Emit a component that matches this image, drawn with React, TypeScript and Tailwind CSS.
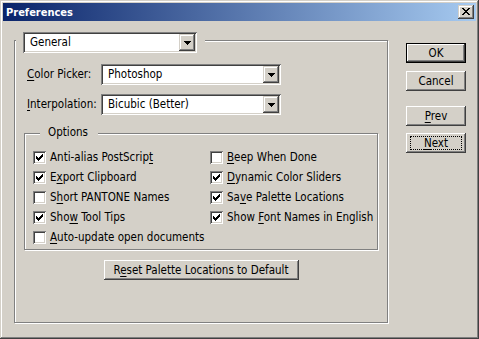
import React from "react";

const sunken =
  "shadow-[inset_1px_1px_0_#808080,inset_-1px_-1px_0_#ffffff,inset_2px_2px_0_#404040,inset_-2px_-2px_0_#d4d0c8]";
const raised =
  "shadow-[inset_-1px_-1px_0_#404040,inset_1px_1px_0_#ffffff,inset_-2px_-2px_0_#808080,inset_2px_2px_0_#d4d0c8]";
const raisedCap =
  "shadow-[inset_-1px_-1px_0_#404040,inset_1px_1px_0_#d4d0c8,inset_-2px_-2px_0_#808080,inset_2px_2px_0_#ffffff]";

function U({ children }: { children: React.ReactNode }) {
  return <span className="underline decoration-1 underline-offset-[2px]">{children}</span>;
}

function Check({ checked }: { checked: boolean }) {
  return (
    <div className={`w-[13px] h-[13px] shrink-0 bg-white ${sunken} flex items-start`}>
      {checked && (
        <svg className="ml-[3px] mt-[3px]" width="7" height="7" shapeRendering="crispEdges">
          <path
            d="M6 0h1v1h-1z M5 1h2v1h-2z M0 2h1v1h-1z M4 2h3v1h-3z M0 3h2v1h-2z M3 3h3v1h-3z M0 4h5v1h-5z M1 5h3v1h-3z M2 6h1v1h-1z"
            fill="#000"
          />
        </svg>
      )}
    </div>
  );
}

function Arrow() {
  return (
    <div className={`w-[16px] h-[17px] shrink-0 bg-[#d4d0c8] ${raisedCap} flex items-center justify-center`}>
      <svg width="7" height="4" shapeRendering="crispEdges" className="mt-[1px]">
        <path d="M0 0h7v1h-7z M1 1h5v1h-5z M2 2h3v1h-3z M3 3h1v1h-1z" fill="#000" />
      </svg>
    </div>
  );
}

function Combo({ value, className }: { value: string; className: string }) {
  return (
    <div className={`flex h-[21px] bg-white p-[2px] ${sunken} ${className}`}>
      <div className="flex-1 flex items-center pl-[5px] leading-[13px]">{value}</div>
      <Arrow />
    </div>
  );
}

function Btn({
  children,
  className = "",
  def = false,
  focus = false,
}: {
  children: React.ReactNode;
  className?: string;
  def?: boolean;
  focus?: boolean;
}) {
  if (def) {
    return (
      <div className={`border border-black ${className}`}>
        <div className={`w-full h-full bg-[#d4d0c8] ${raised} flex items-center justify-center leading-[13px]`}>
          {children}
        </div>
      </div>
    );
  }
  return (
    <div className={`bg-[#d4d0c8] ${raised} flex items-center justify-center leading-[13px] p-[3px] ${className}`}>
      {focus ? (
        <div className="w-full h-full mx-[1px] border border-dotted border-black flex items-center justify-center">
          {children}
        </div>
      ) : (
        children
      )}
    </div>
  );
}

function Opt({ checked, children }: { checked: boolean; children: React.ReactNode }) {
  return (
    <div className="h-[20px] flex items-center">
      <Check checked={checked} />
      <span className="ml-[4px] leading-[13px] whitespace-nowrap">{children}</span>
    </div>
  );
}

export default function App() {
  return (
    <div
      className={`w-[479px] h-[339px] p-[3px] bg-[#d4d0c8] text-black text-[11.5px] font-['DejaVu_Sans_Condensed','DejaVu_Sans',sans-serif] shadow-[inset_-1px_-1px_0_#404040,inset_1px_1px_0_#d4d0c8,inset_-2px_-2px_0_#808080,inset_2px_2px_0_#ffffff] flex flex-col`}
    >
      {/* Title bar */}
      <div className="h-[18px] bg-linear-to-r/srgb from-[#0a246a] to-[#a6caf0] flex items-center justify-between pl-[3px] pr-[2px]">
        <span className="text-white text-[11px] font-bold leading-[13px]">Preferences</span>
        <div className={`w-[16px] h-[14px] bg-[#d4d0c8] ${raisedCap} flex items-start`}>
          <svg className="ml-[4px] mt-[3px]" width="8" height="7" shapeRendering="crispEdges">
            <path
              d="M0 0h2v1h-2z M6 0h2v1h-2z M1 1h2v1h-2z M5 1h2v1h-2z M2 2h4v1h-4z M3 3h2v1h-2z M2 4h4v1h-4z M1 5h2v1h-2z M5 5h2v1h-2z M0 6h2v1h-2z M6 6h2v1h-2z"
              fill="#000"
            />
          </svg>
        </div>
      </div>

      {/* Body */}
      <div className="flex pl-[11px] pt-[19px]">
        {/* Main group */}
        <div className="relative w-[374px] h-[283px] border border-[#808080] shadow-[inset_1px_1px_0_#ffffff,1px_1px_0_#ffffff] flex flex-col">
          <div className="absolute left-[1px] -top-[9px] bg-[#d4d0c8] pl-[7px] pr-[8px]">
            <Combo value="General" className="w-[174px]" />
          </div>

          <div className="mt-[23px] pl-[12px] flex items-center">
            <span className="w-[74px] leading-[13px]">
              <U>C</U>olor Picker:
            </span>
            <Combo value="Photoshop" className="w-[180px]" />
          </div>
          <div className="mt-[9px] pl-[12px] flex items-center">
            <span className="w-[74px] leading-[13px]">
              <U>I</U>nterpolation:
            </span>
            <Combo value="Bicubic (Better)" className="w-[180px]" />
          </div>

          {/* Options group */}
          <div className="relative mt-[18px] ml-[9px] w-[354px] h-[117px] border border-[#808080] shadow-[inset_1px_1px_0_#ffffff,1px_1px_0_#ffffff]">
            <span className="absolute left-[15px] -top-[8px] bg-[#d4d0c8] pl-[8px] pr-[10px] leading-[13px]">
              Options
            </span>
            <div className="pt-[13px] pl-[8px] grid grid-cols-[177px_1fr]">
              <Opt checked>
                Anti-alias PostScrip<U>t</U>
              </Opt>
              <Opt checked={false}>
                <U>B</U>eep When Done
              </Opt>
              <Opt checked>
                E<U>x</U>port Clipboard
              </Opt>
              <Opt checked>
                <U>D</U>ynamic Color Sliders
              </Opt>
              <Opt checked={false}>
                S<U>h</U>ort PANTONE Names
              </Opt>
              <Opt checked>
                Sa<U>v</U>e Palette Locations
              </Opt>
              <Opt checked>
                Sho<U>w</U> Tool Tips
              </Opt>
              <Opt checked>
                Show <U>F</U>ont Names in English
              </Opt>
              <Opt checked={false}>
                <U>A</U>uto-update open documents
              </Opt>
            </div>
          </div>

          <div className="mt-[10px] flex justify-center">
            <Btn className="w-[195px] h-[20px]">
              <span>
                R<U>e</U>set Palette Locations to Default
              </span>
            </Btn>
          </div>
        </div>

        {/* Buttons */}
        <div className="ml-[18px] mt-[3px] flex flex-col">
          <Btn def className="w-[60px] h-[20px]">
            OK
          </Btn>
          <Btn className="w-[60px] h-[20px] mt-[8px]">Cancel</Btn>
          <Btn className="w-[60px] h-[20px] mt-[15px]">
            <span>
              <U>P</U>rev
            </span>
          </Btn>
          <Btn focus className="w-[60px] h-[20px] mt-[7px]">
            <span>
              <U>N</U>ext
            </span>
          </Btn>
        </div>
      </div>
    </div>
  );
}
